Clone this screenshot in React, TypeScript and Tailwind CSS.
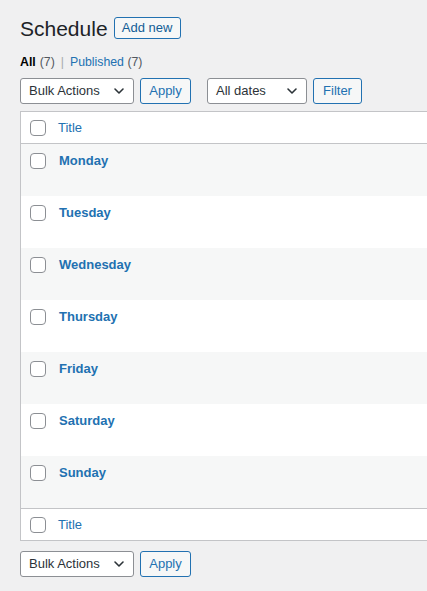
const days = ['Monday', 'Tuesday', 'Wednesday', 'Thursday', 'Friday', 'Saturday', 'Sunday'];

const Checkbox = () => (
    <span className="block w-4 h-4 rounded-[4px] border border-[#8c8f94] bg-white"></span>
);

const Chevron = () => (
    <svg width="16" height="16" viewBox="0 0 16 16" fill="none" className="text-[#2c3338]">
        <path d="M4 6l4 4 4-4" stroke="currentColor" strokeWidth="1.6" strokeLinecap="round" strokeLinejoin="round" />
    </svg>
);

const Select = ({ label, width }: { label: string; width: string }) => (
    <div className={`${width} h-[26px] flex items-center justify-between pl-2 pr-1.5 bg-white border border-[#8c8f94] rounded-[3px] text-[13px] text-[#2c3338]`}>
        <span>{label}</span>
        <Chevron />
    </div>
);

const Button = ({ label, width }: { label: string; width: string }) => (
    <div className={`${width} h-[26px] flex items-center justify-center bg-[#f6f7f7] border border-[#2271b1] rounded-[3px] text-[13px] text-[#2271b1]`}>
        {label}
    </div>
);

const BulkBar = () => (
    <div className="flex items-center">
        <Select label="Bulk Actions" width="w-[114px]" />
        <div className="ml-1.5">
            <Button label="Apply" width="w-[51px]" />
        </div>
    </div>
);

export default function App() {
    return (
        <div className="w-[427px] h-[591px] overflow-hidden bg-[#f0f0f1] font-['Liberation_Sans',Arial,sans-serif] text-[#1d2327]">
            <div className="pl-5 pt-[14px]">
                {/* Heading */}
                <div className="flex items-center h-[28px]">
                    <h1 className="text-[21px] leading-none font-normal text-[#1d2327]">Schedule</h1>
                    <div className="ml-[6px] w-[67px] h-[22px] flex items-center justify-center border border-[#2271b1] rounded-[3px] bg-[#f6f7f7] text-[13px] font-normal text-[#135e96]">
                        Add new
                    </div>
                </div>

                {/* Views */}
                <div className="mt-[13px] flex items-center h-[14px] text-[12.3px] leading-none">
                    <span className="font-bold text-black">All</span>
                    <span className="ml-1 text-[#50575e]">(7)</span>
                    <span className="mx-[6px] text-[#a7aaad]">|</span>
                    <span className="text-[#2271b1]">Published <span className="text-[#50575e]">(7)</span></span>
                </div>

                {/* Filters */}
                <div className="mt-[9px] flex items-center">
                    <BulkBar />
                    <div className="ml-4 flex items-center">
                        <Select label="All dates" width="w-[100px]" />
                        <div className="ml-1.5">
                            <Button label="Filter" width="w-[49px]" />
                        </div>
                    </div>
                </div>

                {/* Table */}
                <div className="mt-[7px] border border-r-0 border-[#c3c4c7] bg-white">
                    <div className="h-[32px] flex items-center border-b border-[#c3c4c7]">
                        <div className="w-[37px] pl-[9px]"><Checkbox /></div>
                        <span className="text-[13px] text-[#2271b1]">Title</span>
                    </div>
                    {days.map((day, i) => (
                        <div key={day} className={`h-[52px] flex items-start pt-[9px] ${i % 2 === 0 ? 'bg-[#f6f7f7]' : 'bg-white'}`}>
                            <div className="w-[38px] pl-[9px]"><Checkbox /></div>
                            <span className="text-[13px] font-bold text-[#2271b1] leading-[18px] -mt-[1px]">{day}</span>
                        </div>
                    ))}
                    <div className="h-[32px] flex items-center border-t border-[#c3c4c7]">
                        <div className="w-[37px] pl-[9px]"><Checkbox /></div>
                        <span className="text-[13px] text-[#2271b1]">Title</span>
                    </div>
                </div>

                <div className="mt-[10px]">
                    <BulkBar />
                </div>
            </div>
        </div>
    );
}
